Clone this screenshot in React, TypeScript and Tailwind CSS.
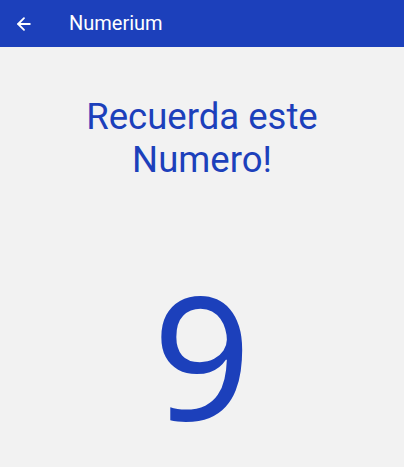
import { ArrowLeft } from 'lucide-react';

export default function App() {
  return (
    <div className="w-[404px] h-[467px] bg-[#f2f2f2] flex flex-col overflow-hidden" style={{ fontFamily: 'Roboto, sans-serif' }}>
      <header className="h-[47px] bg-[#1c40bb] flex items-center px-[14px] shrink-0">
        <ArrowLeft className="w-[20px] h-[20px] text-white" strokeWidth={2.2} />
        <span className="ml-[35px] -mt-[2px] text-white text-[20px]">Numerium</span>
      </header>
      <div className="flex flex-col items-center">
        <h1 className="mt-[48px] text-[#1c40bb] text-[36.5px] leading-[43px] text-center">
          Recuerda este
          <br />
          Numero!
        </h1>
        <div className="mt-[78px] text-[#1c40bb] text-[172px] leading-[1.1] font-['Noto_Sans',sans-serif]">9</div>
      </div>
    </div>
  );
}
